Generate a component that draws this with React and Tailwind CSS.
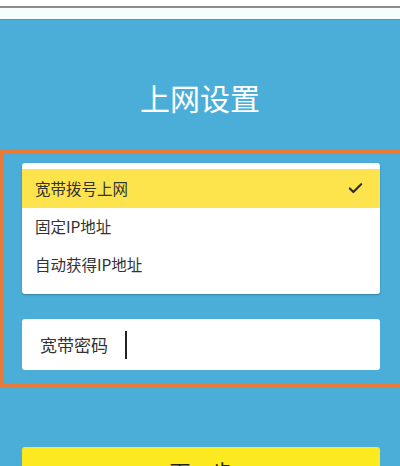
import { Check } from 'lucide-react';

const options = ['宽带拨号上网', '固定IP地址', '自动获得IP地址'];

const App = () => {
  const selected = 0;

  return (
    <div className="w-[400px] h-[466px] overflow-hidden bg-[#4aaed8] font-['Noto_Sans_CJK_SC','Noto_Sans',sans-serif]">
      {/* top strip */}
      <div className="h-[6px] bg-white" />
      <div className="h-[2px] bg-[#8c8c8c]" />
      <div className="h-[11px] bg-[#f7fdff]" />
      <div className="h-[1px] bg-[#5f93a6]" />

      <h1 className="mt-[57px] text-center text-[30px] leading-[40px] text-white">上网设置</h1>

      <div className="mt-[33px] border-[4px] border-r-0 border-[#e87b3a] pt-[9px] pb-[13px] pl-[18px] pr-[20px]">
        <div className="rounded-[3px] bg-white pt-[6px] pb-[10px] shadow-[0_1px_2px_rgba(0,0,0,0.25)]">
          {options.map((opt, i) => (
            <div
              key={opt}
              className={
                i === selected
                  ? 'flex h-[39px] items-center justify-between bg-[#fde44c] pl-[13px] pr-[16px]'
                  : 'flex h-[38px] items-center pl-[13px] pr-[16px]'
              }
            >
              <span className="text-[15.5px] text-[#333]">{opt}</span>
              {i === selected && <Check size={17} strokeWidth={3} className="text-[#2d2d2d]" />}
            </div>
          ))}
        </div>

        <div className="mt-[25px] flex h-[51px] items-center rounded-[3px] bg-white pl-[18px]">
          <span className="text-[17px] text-[#333]">宽带密码</span>
          <span className="ml-[17px] h-[28px] w-[2px] bg-[#222]" />
        </div>
      </div>

      <button className="ml-[22px] mt-[60px] h-[60px] w-[358px] rounded-[3px] bg-[#fde91f] pt-[9px] text-[21px] leading-[30px] text-[#222] flex justify-center items-start">
        下一步
      </button>
    </div>
  );
};

export default App;
